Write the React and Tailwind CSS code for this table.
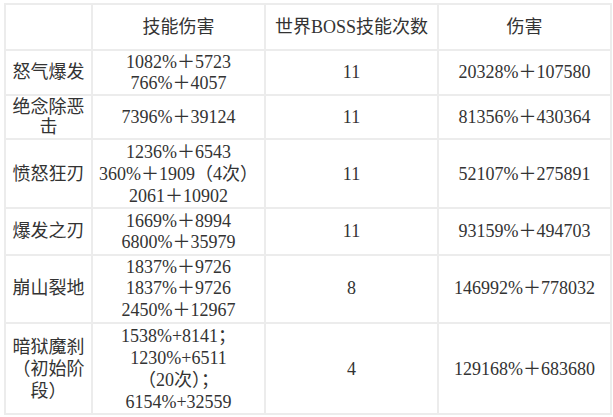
import React from "react";

const rows = [
  { name: ["怒气爆发"], skill: ["1082%＋5723", "766%＋4057"], count: "11", dmg: "20328%＋107580", h: "h-[45px] leading-[21px]" },
  { name: ["绝念除恶", "击"], skill: ["7396%＋39124"], count: "11", dmg: "81356%＋430364", h: "h-[44px] leading-[20px]" },
  { name: ["愤怒狂刃"], skill: ["1236%＋6543", "360%＋1909（4次）", "2061＋10902"], count: "11", dmg: "52107%＋275891", h: "h-[69px] leading-[22px]" },
  { name: ["爆发之刃"], skill: ["1669%＋8994", "6800%＋35979"], count: "11", dmg: "93159%＋494703", h: "h-[47px] leading-[21px]" },
  { name: ["崩山裂地"], skill: ["1837%＋9726", "1837%＋9726", "2450%＋12967"], count: "8", dmg: "146992%＋778032", h: "h-[68px] leading-[21.5px]" },
  {
    name: ["暗狱魔刹", "（初始阶", "段）"],
    skill: ["1538%+8141；", "1230%+6511", "（20次）；", "6154%+32559"],
    count: "4",
    dmg: "129168%＋683680",
    h: "h-[91px] leading-[22px]",
  },
];

const Lines = ({ lines }) => (
  <>
    {lines.map((l, i) => (
      <div key={i} className="whitespace-nowrap">
        {l}
      </div>
    ))}
  </>
);

const cell = "border-2 border-[#ececec] text-center align-middle p-0";

export default function App() {
  return (
    <div className="w-[613px] h-[417px] bg-white pt-[3px] pl-[4px] text-[18px] text-[#333]" style={{ fontFamily: '"Liberation Serif", "Noto Sans CJK SC", serif' }}>
      <table className="border-collapse table-fixed w-[606px]">
        <colgroup>
          <col className="w-[87px]" />
          <col className="w-[173px]" />
          <col className="w-[173px]" />
          <col className="w-[173px]" />
        </colgroup>
        <tbody>
          <tr className="h-[46px] leading-[22px]">
            <td className={cell}></td>
            <td className={cell}>技能伤害</td>
            <td className={cell}>世界BOSS技能次数</td>
            <td className={cell}>伤害</td>
          </tr>
          {rows.map((r, i) => (
            <tr key={i} className={r.h}>
              <td className={cell}>
                <Lines lines={r.name} />
              </td>
              <td className={cell}>
                <Lines lines={r.skill} />
              </td>
              <td className={cell}>{r.count}</td>
              <td className={cell}>{r.dmg}</td>
            </tr>
          ))}
        </tbody>
      </table>
    </div>
  );
}
